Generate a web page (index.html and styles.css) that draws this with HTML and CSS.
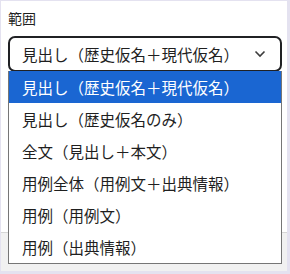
FILE: index.html
```html
<!DOCTYPE html>
<html lang="ja">
<head>
  <meta charset="UTF-8">
  <title>範囲</title>
  <link rel="stylesheet" href="styles.css">
</head>
<body>
  <div class="frame">
    <div class="panel">
      <div class="field-label">範囲</div>
      <div class="select">
        <span class="select-text">見出し（歴史仮名＋現代仮名）</span>
        <svg class="chevron" width="12" height="8" viewBox="0 0 12 8">
          <polyline points="1.5,1.5 6,6 10.5,1.5" fill="none" stroke="#3c3c3c" stroke-width="1.6"/>
        </svg>
      </div>
    </div>
    <div class="footer"></div>

    <ul class="options">
      <li class="option selected">見出し（歴史仮名＋現代仮名）</li>
      <li class="option">見出し（歴史仮名のみ）</li>
      <li class="option">全文（見出し＋本文）</li>
      <li class="option">用例全体（用例文＋出典情報）</li>
      <li class="option">用例（用例文）</li>
      <li class="option">用例（出典情報）</li>
    </ul>
  </div>
</body>
</html>
```

FILE: styles.css
```css
body {
  margin: 0;
  background-color: #e4e2f0;
  font-family: "Noto Sans CJK JP", "Noto Sans", sans-serif;
  color: #1f1f1f;
}

.frame {
  position: relative;
  margin: 1px 3px 0 1px;
  height: 270px;
  display: flex;
  flex-direction: column;
}

.panel {
  background-color: #ffffff;
  height: 231px;
  padding: 7px 5px 0 7px;
  box-sizing: border-box;
}

.field-label {
  font-size: 14px;
  line-height: 20px;
  margin-bottom: 8px;
}

.select {
  display: flex;
  align-items: center;
  justify-content: space-between;
  height: 36px;
  box-sizing: border-box;
  border: 2px solid #202124;
  border-radius: 7px;
  padding: 0 14px 0 12px;
  font-size: 15.5px;
}

.chevron {
  display: block;
}

.footer {
  flex: 1;
  background-color: #f1f1f1;
  border-top: 1px solid #d6d6d6;
}

.options {
  position: absolute;
  top: 70px;
  left: 7px;
  width: 274px;
  margin: 0;
  padding: 0;
  list-style: none;
  background-color: #ffffff;
  border: 1px solid #767676;
  border-top: none;
  box-sizing: border-box;
}

.option {
  height: 32px;
  line-height: 32px;
  padding-left: 13px;
  font-size: 15.5px;
  white-space: nowrap;
}

.option.selected {
  background-color: #1a66d2;
  color: #ffffff;
}
```
